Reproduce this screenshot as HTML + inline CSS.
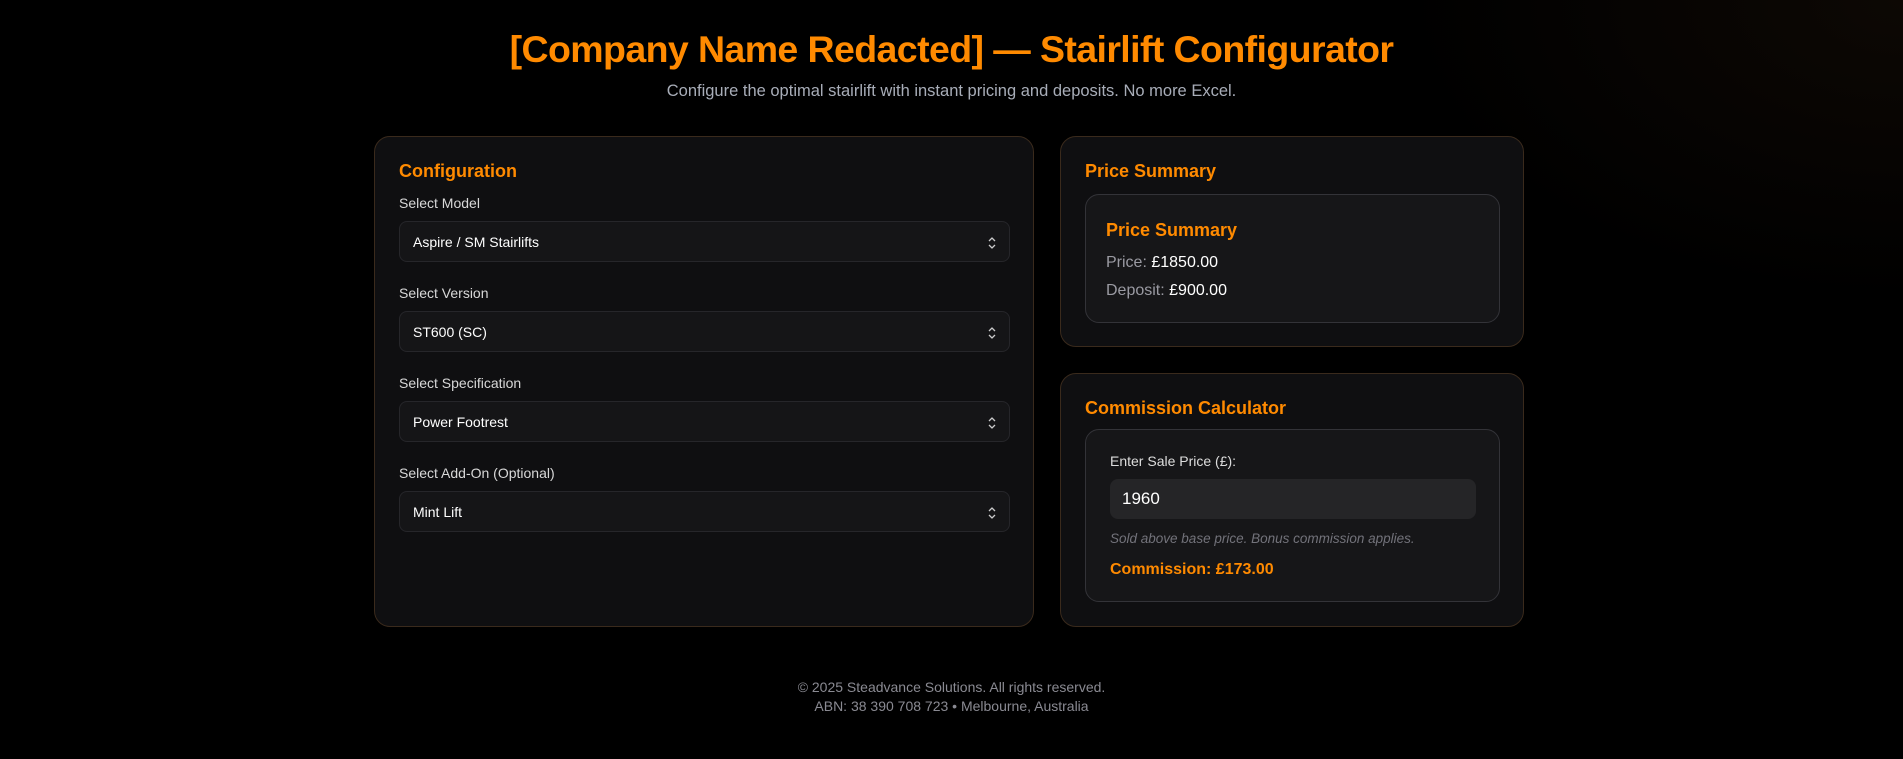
<!DOCTYPE html>
<html><head><meta charset="utf-8"><style>
*{box-sizing:border-box;margin:0;padding:0}
body{width:1903px;height:759px;overflow:hidden;background:#000;background-image:radial-gradient(ellipse 500px 300px at 1903px 0,#0d0804,#000);font-family:"Liberation Sans",sans-serif;color:#e5e5e5;position:relative}
.abs{position:absolute}
h1{position:absolute;left:0;width:1903px;top:28px;text-align:center;font-size:37.5px;font-weight:bold;color:#ff8a00;letter-spacing:-0.6px}
.sub{left:0;width:1903px;top:82px;text-align:center;font-size:16.5px;color:#a8adb8}
.card{position:absolute;background:#0f0f11;border:1px solid #3a2a1c;border-radius:16px}
.h{position:absolute;color:#ff8a00;font-weight:bold;font-size:18px}
.lbl{position:absolute;left:24px;font-size:14px;color:#d8d8d8}
.sel{position:absolute;left:24px;width:611px;height:41px;background:#151517;border:1px solid #26262a;border-radius:8px;font-size:14px;color:#fff;padding:12px 13px}
.sel svg{position:absolute;right:12px;top:13px}
.inner{position:absolute;background:#161618;border:1px solid #333338;border-radius:14px}
.t{position:absolute;font-size:16px;color:#9a9aa2}
.t b{color:#fff;font-weight:normal}
</style></head><body>
<h1>[Company Name Redacted] — Stairlift Configurator</h1>
<div class="abs sub">Configure the optimal stairlift with instant pricing and deposits. No more Excel.</div>

<div class="card" style="left:374px;top:136px;width:660px;height:491px">
<div class="h" style="left:24px;top:24px">Configuration</div>
<div class="lbl" style="top:58px">Select Model</div>
<div class="sel" style="top:84px">Aspire / SM Stairlifts<svg width="10" height="16" viewBox="0 0 10 16"><path d="M2 6l3-3 3 3M2 10l3 3 3-3" fill="none" stroke="#ccc" stroke-width="1.3"/></svg></div>
<div class="lbl" style="top:148px">Select Version</div>
<div class="sel" style="top:174px">ST600 (SC)<svg width="10" height="16" viewBox="0 0 10 16"><path d="M2 6l3-3 3 3M2 10l3 3 3-3" fill="none" stroke="#ccc" stroke-width="1.3"/></svg></div>
<div class="lbl" style="top:238px">Select Specification</div>
<div class="sel" style="top:264px">Power Footrest<svg width="10" height="16" viewBox="0 0 10 16"><path d="M2 6l3-3 3 3M2 10l3 3 3-3" fill="none" stroke="#ccc" stroke-width="1.3"/></svg></div>
<div class="lbl" style="top:328px">Select Add-On (Optional)</div>
<div class="sel" style="top:354px">Mint Lift<svg width="10" height="16" viewBox="0 0 10 16"><path d="M2 6l3-3 3 3M2 10l3 3 3-3" fill="none" stroke="#ccc" stroke-width="1.3"/></svg></div>
</div>

<div class="card" style="left:1060px;top:136px;width:464px;height:211px">
<div class="h" style="left:24px;top:24px">Price Summary</div>
<div class="inner" style="left:24px;top:57px;width:415px;height:129px">
<div class="h" style="left:20px;top:25px">Price Summary</div>
<div class="t" style="left:20px;top:59px">Price: <b>£1850.00</b></div>
<div class="t" style="left:20px;top:87px">Deposit: <b>£900.00</b></div>
</div></div>

<div class="card" style="left:1060px;top:373px;width:464px;height:254px">
<div class="h" style="left:24px;top:24px">Commission Calculator</div>
<div class="inner" style="left:24px;top:55px;width:415px;height:173px">
<div class="t" style="left:24px;top:23px;font-size:14px;color:#ddd">Enter Sale Price (£):</div>
<div class="abs" style="left:24px;top:49px;width:366px;height:40px;background:#252527;border-radius:8px;font-size:17px;color:#fff;padding:10px 12px">1960</div>
<div class="t" style="left:24px;top:101px;font-size:13.5px;font-style:italic;color:#72727a">Sold above base price. Bonus commission applies.</div>
<div class="t" style="left:24px;top:131px;font-weight:bold;color:#ff8a00">Commission: £173.00</div>
</div></div>

<div class="abs" style="left:0;width:1903px;top:678px;text-align:center;font-size:14px;color:#8a8a92;line-height:19px">© 2025 Steadvance Solutions. All rights reserved.<br>ABN: 38 390 708 723 • Melbourne, Australia</div>
</body></html>
